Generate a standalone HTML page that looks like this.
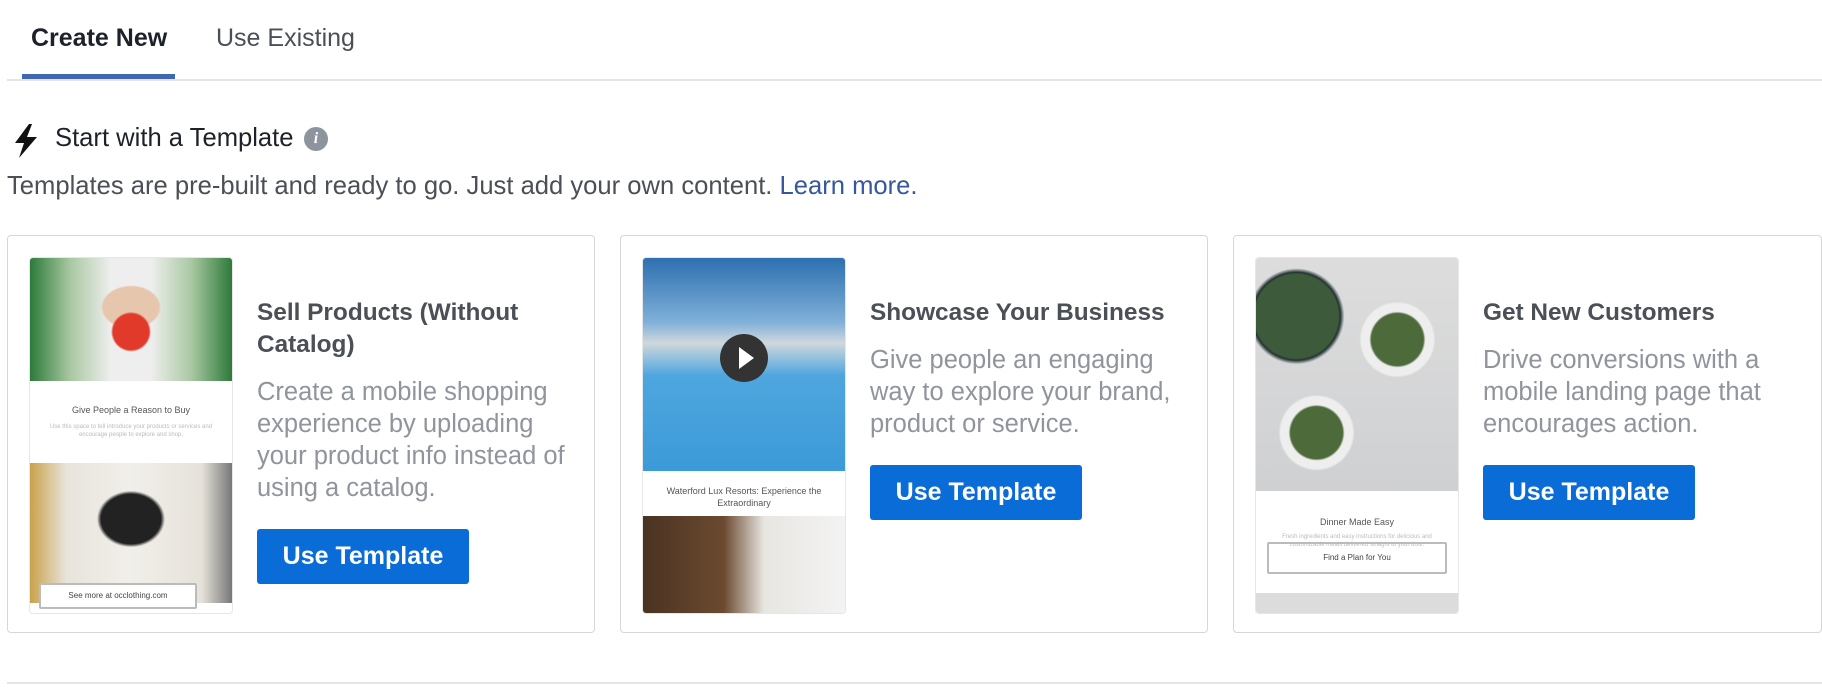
<!DOCTYPE html>
<html><head><meta charset="utf-8"><style>
*{box-sizing:border-box;margin:0;padding:0}
body{width:1822px;height:692px;background:#fff;font-family:"Liberation Sans",Helvetica,Arial,sans-serif;position:relative;overflow:hidden;color:#1d2129}
.abs{position:absolute}
.tab{position:absolute;top:22px;font-size:25px;line-height:32px}
.card{position:absolute;top:235px;height:398px;border:1.5px solid #d5d7da;border-radius:4px;background:#fff}
.img{position:absolute;left:22px;top:22px;width:202px;height:355px;border-radius:3px;overflow:hidden;background:#fff;box-shadow:0 0 0 1px #e6e6e6}
.txt{position:absolute;left:249px;top:61px;width:324px}
.t{font-weight:bold;font-size:24.4px;line-height:32px;color:#4b4f56}
.d{font-size:25.5px;line-height:32px;color:#90949c;margin-top:15px}
.btn{margin-top:25px;width:212px;height:55px;background:#0a6cd6;border-radius:3px;color:#fff;font-weight:bold;font-size:25px;display:flex;align-items:center;justify-content:center}
.small{font-size:9px;color:#555;text-align:center}
.faint{font-size:6px;color:#bbb;text-align:center;line-height:8px}
</style></head><body>
<div class="tab" style="left:31px;font-weight:bold;color:#1d2129">Create New</div>
<div class="tab" style="left:216px;color:#4b4f56">Use Existing</div>
<div class="abs" style="left:22px;top:74px;width:153px;height:5px;background:#4267b2"></div>
<div class="abs" style="left:7px;top:79px;width:1815px;height:2px;background:#e5e5e5"></div>

<svg class="abs" style="left:13px;top:124px" width="26" height="34" viewBox="0 0 26 34"><path d="M16 0 L2 19 L11 19 L6 34 L24 13 L14 13 L19 0 Z" fill="#111"/></svg>
<div class="abs" style="left:55px;top:123px;font-size:25.6px;line-height:30px;color:#1d2129">Start with a Template</div>
<div class="abs" style="left:304px;top:127px;width:24px;height:24px;border-radius:50%;background:#8d949e;color:#fff;font-size:16px;font-weight:bold;font-style:italic;text-align:center;line-height:24px;font-family:'Liberation Serif',serif">i</div>
<div class="abs" style="left:7px;top:171px;font-size:25.6px;line-height:30px;color:#4b4f56">Templates are pre-built and ready to go. Just add your own content. <span style="color:#365899">Learn more.</span></div>

<div class="card" style="left:7px;width:588px">
 <div class="img">
  <div style="height:123px;background:radial-gradient(circle at 50% 60%,#e23a2a 0 18px,transparent 20px),radial-gradient(ellipse at 50% 40%,#e7c6ae 0 28px,transparent 30px),linear-gradient(90deg,#2d7a3a 0,#a9c8a2 20%,#eeeeee 40%,#eee 60%,#a9c8a2 80%,#2d7a3a 100%)"></div>
  <div class="small" style="margin-top:24px">Give People a Reason to Buy</div>
  <div class="faint" style="margin:8px 18px 0">Use this space to tell introduce your products or services and encourage people to explore and shop.</div>
  <div style="position:absolute;top:205px;left:0;right:0;height:140px;background:radial-gradient(ellipse at 50% 40%,#222 0 30px,transparent 34px),linear-gradient(90deg,#c9a24a 0,#e8e4dc 18%,#f1efea 50%,#e6e2da 85%,#777 100%)"></div>
  <div style="position:absolute;top:325px;left:9px;width:158px;height:26px;border:2px solid #bbb;background:#fff;border-radius:2px;font-size:8px;color:#444;text-align:center;line-height:22px">See more at occlothing.com</div>
 </div>
 <div class="txt"><div class="t">Sell Products (Without Catalog)</div><div class="d">Create a mobile shopping experience by uploading your product info instead of using a catalog.</div><div class="btn">Use Template</div></div>
</div>

<div class="card" style="left:620px;width:588px">
 <div class="img">
  <div style="height:213px;background:linear-gradient(180deg,#2d6fb0 0,#7fb0d8 30%,#cfd8dc 40%,#4fa6de 55%,#3b9ad8 100%)"></div>
  <div style="position:absolute;left:77px;top:76px;width:48px;height:48px;border-radius:50%;background:#333"><div style="position:absolute;left:19px;top:13px;border-left:15px solid #fff;border-top:11px solid transparent;border-bottom:11px solid transparent"></div></div>
  <div class="small" style="margin-top:14px;line-height:12px">Waterford Lux Resorts: Experience the Extraordinary</div>
  <div style="position:absolute;top:258px;left:0;right:0;height:97px;background:linear-gradient(90deg,#4a3322 0,#6b4a30 40%,#e8e6e2 60%,#f3f3f3 100%)"></div>
 </div>
 <div class="txt"><div class="t">Showcase Your Business</div><div class="d">Give people an engaging way to explore your brand, product or service.</div><div class="btn">Use Template</div></div>
</div>

<div class="card" style="left:1233px;width:589px">
 <div class="img">
  <div style="height:233px;background:radial-gradient(circle at 20% 25%,#3d5a3a 0 42px,#233 44px,transparent 48px),radial-gradient(circle at 70% 35%,#4d6a3a 0 26px,#eee 28px 36px,transparent 38px),radial-gradient(circle at 30% 75%,#4d6a3a 0 26px,#eee 28px 36px,transparent 38px),linear-gradient(180deg,#ddd,#cfd0d2)"></div>
  <div class="small" style="margin-top:26px">Dinner Made Easy</div>
  <div class="faint" style="margin:6px 10px 0">Fresh ingredients and easy instructions for delicious and customizable meals delivered straight to your door.</div>
  <div style="position:absolute;top:284px;left:11px;width:180px;height:32px;border:2px solid #bbb;border-radius:2px;font-size:8px;color:#444;text-align:center;line-height:28px">Find a Plan for You</div>
  <div style="position:absolute;top:335px;left:0;right:0;height:20px;background:#dcdcdc"></div>
 </div>
 <div class="txt"><div class="t">Get New Customers</div><div class="d">Drive conversions with a mobile landing page that encourages action.</div><div class="btn">Use Template</div></div>
</div>

<div class="abs" style="left:7px;top:682px;width:1815px;height:2px;background:#e5e5e5"></div>
</body></html>
